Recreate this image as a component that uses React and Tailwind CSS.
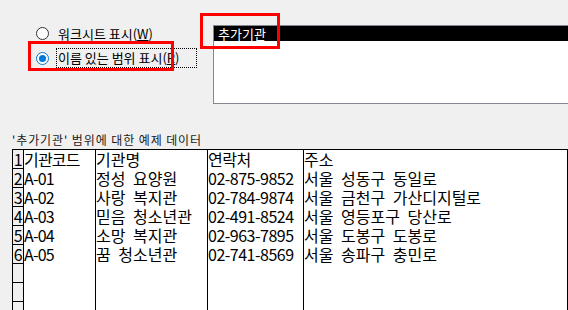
import React from 'react';

const rows = [
    ['기관코드', '기관명', '연락처', '주소'],
    ['A-01', '정성 요양원', '02-875-9852', '서울 성동구 동일로'],
    ['A-02', '사랑 복지관', '02-784-9874', '서울 금천구 가산디지털로'],
    ['A-03', '믿음 청소년관', '02-491-8524', '서울 영등포구 당산로'],
    ['A-04', '소망 복지관', '02-963-7895', '서울 도봉구 도봉로'],
    ['A-05', '꿈 청소년관', '02-741-8569', '서울 송파구 충민로'],
];

const emptyRows = [7, 8, 9];
// column widths include the right border line
const cols = [
    'w-[72px] tracking-[-0.8px]',
    'w-[112px] [word-spacing:4px]',
    'w-[96px] tracking-[-0.5px]',
    'flex-1 [word-spacing:4px]',
];

const uiFont = { fontFamily: '"Noto Sans CJK KR", "Noto Sans", sans-serif' };

const Radio = ({ checked }) => (
    <span className={`w-[13px] h-[13px] shrink-0 rounded-full border flex items-center justify-center bg-white ${checked ? 'border-[#0078d7]' : 'border-[#333333]'}`}>
        {checked && <span className="w-[7px] h-[7px] rounded-full bg-[#0078d7]" />}
    </span>
);

export default function App() {
    return (
        <div className="relative w-[568px] h-[310px] overflow-hidden bg-[#f0f0f0] text-black" style={uiFont}>
            {/* top: options + list */}
            <div className="flex pt-[25px] h-[104px]">
                <div className="flex flex-col pl-[36px] w-[213px] pt-[2px] text-[13px] leading-[16px]">
                    <div className="flex items-center gap-[9px] h-[13px]">
                        <Radio />
                        <span>워크시트 표시(<span className="underline">W</span>)</span>
                    </div>
                    <div className="flex items-center gap-[7px] mt-[8px]">
                        <Radio checked />
                        <span className="w-[141px] h-[20px] border border-dotted border-black pl-[1px] pt-[1px] whitespace-nowrap">
                            이름 있는 범위 표시(<span className="underline">R</span>)
                        </span>
                    </div>
                </div>
                <div className="flex-1 border border-[#828790] border-r-0 bg-white h-[79px]">
                    <div className="bg-black text-white text-[13px] leading-[15px] h-[15px] pl-[4px]">추가기관</div>
                </div>
            </div>

            {/* caption */}
            <div className="pl-[12px] mt-[29px] text-[12px] leading-[14px] text-[#1a1a1a] tracking-[0.9px]">'추가기관' 범위에 대한 예제 데이터</div>

            {/* data grid */}
            <div className="ml-[12px] mt-[2px] flex border-t border-l border-black text-[16px] leading-[19px]">
                <div className="w-[11px] border-r border-black flex flex-col bg-[#f0f0f0]">
                    {rows.map((_, i) => (
                        <div key={i} className="h-[19px] border-b border-black text-center leading-[18px] tracking-[-0.5px]">{i + 1}</div>
                    ))}
                    {emptyRows.map((n) => (
                        <div key={n} className="h-[19px] border-b border-black" />
                    ))}
                </div>
                {cols.map((w, c) => (
                    <div key={c} className={`${w} bg-white border-r border-black flex flex-col h-[200px]`}>
                        {rows.map((r, i) => (
                            <div key={i} className="h-[19px] whitespace-nowrap">{r[c]}</div>
                        ))}
                    </div>
                ))}
            </div>

            {/* red highlight boxes */}
            <div className="absolute left-[28px] top-[41px] w-[146px] h-[30px] border-[3px] border-[#ff0000]" />
            <div className="absolute left-[200px] top-[13px] w-[80px] h-[36px] border-[3px] border-[#ff0000]" />
        </div>
    );
}
